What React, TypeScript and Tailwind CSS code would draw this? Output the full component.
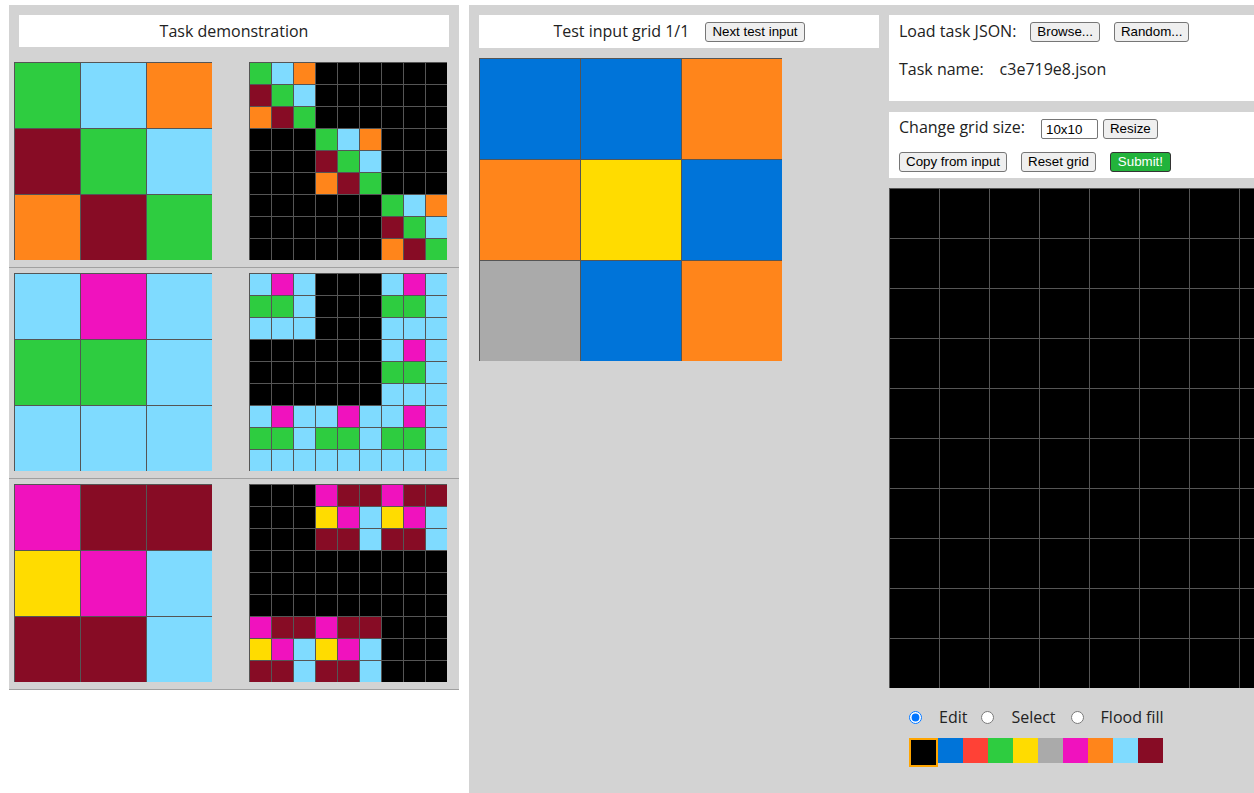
import React from "react";

const COLORS = [
  "#000000",
  "#0074D9",
  "#FF4136",
  "#2ECC40",
  "#FFDC00",
  "#AAAAAA",
  "#F012BE",
  "#FF851B",
  "#7FDBFF",
  "#870C25",
];

type G = number[][];

const TRAIN: G[] = [
  [
    [3, 8, 7],
    [9, 3, 8],
    [7, 9, 3],
  ],
  [
    [8, 6, 8],
    [3, 3, 8],
    [8, 8, 8],
  ],
  [
    [6, 9, 9],
    [4, 6, 8],
    [9, 9, 8],
  ],
];

const TEST: G = [
  [1, 1, 7],
  [7, 4, 1],
  [5, 1, 7],
];

function solve(g: G): G {
  const counts: Record<number, number> = {};
  g.flat().forEach((v) => (counts[v] = (counts[v] || 0) + 1));
  let best = 0;
  let bestC = -1;
  Object.entries(counts).forEach(([k, c]) => {
    if (c > bestC) {
      bestC = c;
      best = Number(k);
    }
  });
  const out: G = Array.from({ length: 9 }, () => Array(9).fill(0));
  for (let bi = 0; bi < 3; bi++)
    for (let bj = 0; bj < 3; bj++)
      if (g[bi][bj] === best)
        for (let i = 0; i < 3; i++)
          for (let j = 0; j < 3; j++) out[bi * 3 + i][bj * 3 + j] = g[i][j];
  return out;
}

function Grid({ data, cellClass }: { data: G; cellClass: string }) {
  return (
    <div className="flex flex-col shrink-0">
      {data.map((row, i) => (
        <div key={i} className="flex">
          {row.map((v, j) => (
            <div
              key={j}
              className={`box-border border-t border-l border-[#555555] shrink-0 ${cellClass}`}
              style={{ backgroundColor: COLORS[v] }}
            />
          ))}
        </div>
      ))}
    </div>
  );
}

function Btn({ children, className = "" }: { children: React.ReactNode; className?: string }) {
  return (
    <button
      className={`h-[20px] px-[6px] border border-[#767676] rounded-[3px] bg-[#efefef] text-[13.333px] leading-[16px] text-black font-['Liberation_Sans',Arial,sans-serif] whitespace-nowrap ${className}`}
    >
      {children}
    </button>
  );
}

export default function App() {
  const edit: G = Array.from({ length: 10 }, () => Array(10).fill(0));
  return (
    <div className="w-[1254px] h-[793px] overflow-hidden bg-white text-[#222] font-['Open_Sans','Noto_Sans',sans-serif]">
      <div className="flex items-start pt-[5px] pl-[9px]">
        {/* Left: task demonstration */}
        <div className="w-[450px] shrink-0 bg-[#d3d3d3]">
          <div className="mx-[10px] mt-[10px] h-[32px] bg-white flex items-center justify-center text-[16px] leading-[22px]">
            Task demonstration
          </div>
          {TRAIN.map((g, idx) => (
            <div
              key={idx}
              className={`flex pl-[5px] pb-[7px] border-b border-[#a0a0a0] ${idx === 0 ? "pt-[15px]" : "pt-[5px]"}`}
            >
              <Grid data={g} cellClass="w-[66px] h-[66px]" />
              <div className="ml-[37px]">
                <Grid data={solve(g)} cellClass="w-[22px] h-[22px]" />
              </div>
            </div>
          ))}
        </div>

        {/* Right side: gray workspace */}
        <div className="ml-[10px] h-[800px] w-[900px] shrink-0 bg-[#d3d3d3] flex items-start pl-[10px] pt-[10px]">
          {/* Test input column */}
          <div className="w-[400px] shrink-0">
            <div className="h-[33px] bg-white flex items-center justify-center text-[16px] leading-[22px]">
              <span className="pb-[1px]">Test input grid 1/1</span>
              <Btn className="ml-[16px]">Next test input</Btn>
            </div>
            <div className="mt-[10px]">
              <Grid data={TEST} cellClass="w-[101px] h-[101px]" />
            </div>
          </div>

          {/* Editor column */}
          <div className="ml-[10px] w-[520px] shrink-0 text-[16px]">
            <div className="h-[86px] bg-white pl-[10px] pt-[7px]">
              <div className="flex items-center h-[20px]">
                <span className="leading-[22px] pb-[3px]">Load task JSON:</span>
                <Btn className="ml-[14px]">Browse...</Btn>
                <Btn className="ml-[14px]">Random...</Btn>
              </div>
              <div className="mt-[16px] leading-[22px] flex">
                <span>Task name:</span>
                <span className="ml-[16px]">c3e719e8.json</span>
              </div>
            </div>

            <div className="mt-[11px] h-[66px] bg-white pl-[10px] pt-[7px]">
              <div className="flex items-center h-[20px]">
                <span className="leading-[22px] pb-[4px]">Change grid size:</span>
                <input
                  readOnly
                  value="10x10"
                  className="ml-[16px] w-[57px] h-[20px] box-border border border-[#767676] rounded-[2px] px-[4px] text-[13.333px] text-black bg-white font-['Liberation_Sans',Arial,sans-serif] outline-none"
                />
                <Btn className="ml-[5px]">Resize</Btn>
              </div>
              <div className="flex items-center mt-[13px]">
                <Btn>Copy from input</Btn>
                <Btn className="ml-[14px]">Reset grid</Btn>
                <button className="ml-[14px] h-[20px] px-[7px] border border-[#333] rounded-[3px] bg-[#22b33b] text-[13.333px] leading-[16px] text-white font-['Liberation_Sans',Arial,sans-serif]">
                  Submit!
                </button>
              </div>
            </div>

            <div className="mt-[10px]">
              <Grid data={edit} cellClass="w-[50px] h-[50px]" />
            </div>

            <div className="mt-[18px] h-[22px] flex items-center pl-[20px] leading-[22px]">
              <input type="radio" name="tool" defaultChecked className="m-0 w-[13px] h-[13px]" />
              <span className="ml-[17px]">Edit</span>
              <input type="radio" name="tool" className="ml-[14px] m-0 w-[13px] h-[13px]" />
              <span className="ml-[17px]">Select</span>
              <input type="radio" name="tool" className="ml-[15px] m-0 w-[13px] h-[13px]" />
              <span className="ml-[17px]">Flood fill</span>
            </div>

            <div className="mt-[10px] pl-[20px] flex items-start">
              {COLORS.map((c, i) => (
                <div
                  key={i}
                  className={
                    i === 0
                      ? "box-border w-[29px] h-[29px] border-2 border-[#ffa500]"
                      : "w-[25px] h-[25px]"
                  }
                  style={{ backgroundColor: c }}
                />
              ))}
            </div>
          </div>
        </div>
      </div>
    </div>
  );
}
